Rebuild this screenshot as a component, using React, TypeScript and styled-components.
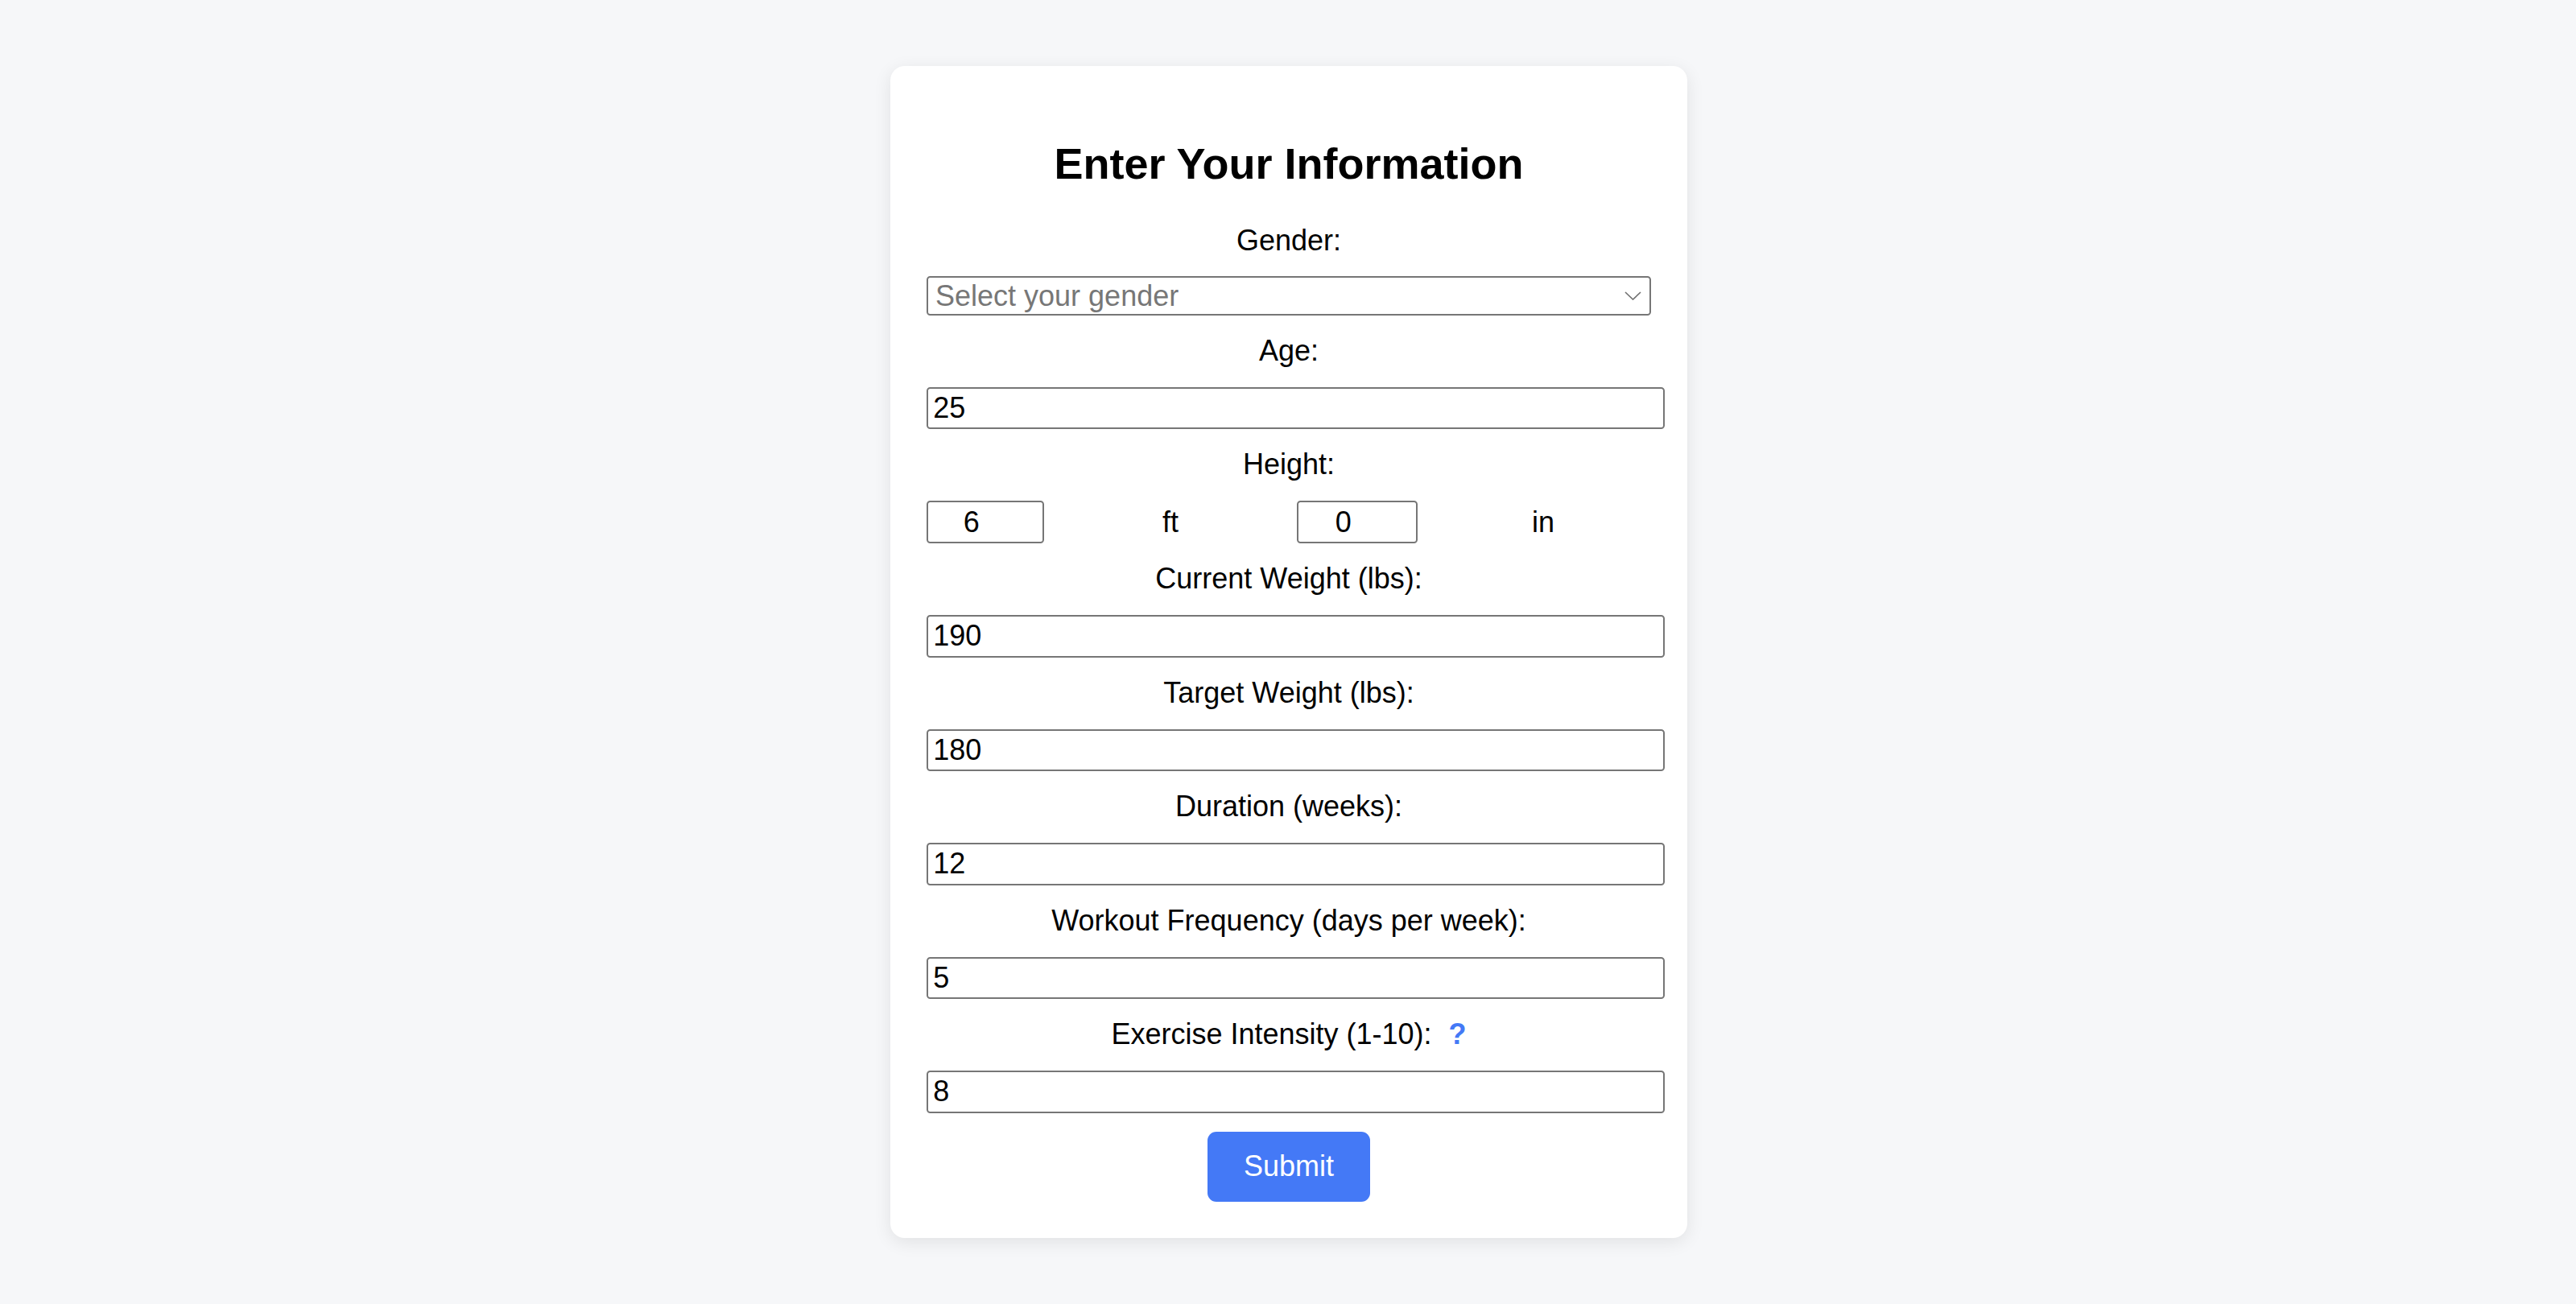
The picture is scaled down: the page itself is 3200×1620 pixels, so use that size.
import React from 'react';
import styled, { createGlobalStyle } from 'styled-components';

const GlobalStyle = createGlobalStyle`
  html, body {
    margin: 0;
    padding: 0;
    background: #f6f7f9;
  }
  body {
    font-family: "Liberation Sans", Arial, sans-serif;
    color: #000;
  }
  * { box-sizing: border-box; }
`;

const Page = styled.main`
  min-height: 1620px;
  display: flex;
  justify-content: center;
  align-items: flex-start;
  padding: 82px 0 0 2px;
`;

const Card = styled.form`
  width: 990px;
  background: #ffffff;
  border-radius: 18px;
  padding: 45px;
  box-shadow: 0 5px 22px rgba(0, 0, 0, 0.09);
  display: flex;
  flex-direction: column;
  align-items: stretch;
`;

const Title = styled.h2`
  margin: 45px 0 43.7px;
  font-size: 54px;
  line-height: 62px;
  font-weight: 700;
  text-align: center;
`;

const Field = styled.div`
  display: flex;
  flex-direction: column;
  align-items: flex-start;
  & + & {
    margin-top: 23.2px;
  }
`;

const Label = styled.label`
  align-self: stretch;
  display: block;
  text-align: center;
  font-size: 36px;
  line-height: 41.4px;
  margin-bottom: 24.3px;
`;

const Help = styled.span`
  margin-left: 21px;
  color: #4479f6;
  font-weight: 700;
  cursor: help;
`;

const TextInput = styled.input`
  box-sizing: content-box;
  width: 100%;
  height: 48.6px;
  padding: 0 6.25px;
  margin: 0;
  border: 2px solid #767676;
  border-radius: 4.5px;
  background: #fff;
  font-family: "Liberation Sans", Arial, sans-serif;
  font-size: 36px;
  color: #000;
  outline: none;
`;

const SelectWrap = styled.div`
  position: relative;
  width: 100%;
`;

const Select = styled.select`
  appearance: none;
  -webkit-appearance: none;
  width: 100%;
  height: 48.4px;
  padding: 0 40px 0 9px;
  margin: 0;
  border: 2px solid #767676;
  border-radius: 4.5px;
  background: #fff;
  font-family: "Liberation Sans", Arial, sans-serif;
  font-size: 36px;
  color: #777;
  outline: none;
`;

const Chevron = styled.svg`
  position: absolute;
  right: 12px;
  top: 19px;
  width: 21px;
  height: 11px;
  pointer-events: none;
`;

const HeightRow = styled.div`
  display: grid;
  grid-template-columns: 146px 314px 150px 312px;
  align-items: center;
`;

const SmallInput = styled.input`
  width: 100%;
  height: 53px;
  padding: 0 40.5px 0 6px;
  margin: 0;
  border: 2px solid #767676;
  border-radius: 4.5px;
  background: #fff;
  font-family: "Liberation Sans", Arial, sans-serif;
  font-size: 36px;
  color: #000;
  text-align: center;
  outline: none;
`;

const Unit = styled.span`
  text-align: center;
  font-size: 36px;
  line-height: 41.4px;
`;

const SubmitButton = styled.button`
  align-self: center;
  margin-top: 23.4px;
  padding: 0 45px;
  height: 87px;
  border: none;
  border-radius: 11px;
  background: #4479f6;
  color: #fff;
  font-family: "Liberation Sans", Arial, sans-serif;
  font-size: 36px;
  cursor: pointer;
`;

const fields: { id: string; label: string; value: string }[] = [
  { id: 'current', label: 'Current Weight (lbs):', value: '190' },
  { id: 'target', label: 'Target Weight (lbs):', value: '180' },
  { id: 'duration', label: 'Duration (weeks):', value: '12' },
  { id: 'frequency', label: 'Workout Frequency (days per week):', value: '5' },
];

export default function App() {
  return (
    <>
      <GlobalStyle />
      <Page>
        <Card onSubmit={(e) => e.preventDefault()}>
          <Title>Enter Your Information</Title>

          <Field>
            <Label htmlFor="gender">Gender:</Label>
            <SelectWrap>
              <Select id="gender" defaultValue="">
                <option value="" disabled>
                  Select your gender
                </option>
                <option value="male">Male</option>
                <option value="female">Female</option>
              </Select>
              <Chevron viewBox="0 0 21 11" fill="none">
                <polyline points="1,1 10.5,10 20,1" stroke="#6f6f6f" strokeWidth="1.6" />
              </Chevron>
            </SelectWrap>
          </Field>

          <Field>
            <Label htmlFor="age">Age:</Label>
            <TextInput id="age" type="text" inputMode="numeric" defaultValue="25" />
          </Field>

          <Field>
            <Label>Height:</Label>
            <HeightRow>
              <SmallInput type="text" inputMode="numeric" defaultValue="6" aria-label="feet" />
              <Unit>ft</Unit>
              <SmallInput type="text" inputMode="numeric" defaultValue="0" aria-label="inches" />
              <Unit>in</Unit>
            </HeightRow>
          </Field>

          {fields.map((f) => (
            <Field key={f.id}>
              <Label htmlFor={f.id}>{f.label}</Label>
              <TextInput id={f.id} type="text" inputMode="numeric" defaultValue={f.value} />
            </Field>
          ))}

          <Field>
            <Label htmlFor="intensity">
              Exercise Intensity (1-10):<Help title="1 = very light, 10 = maximum effort">?</Help>
            </Label>
            <TextInput id="intensity" type="text" inputMode="numeric" defaultValue="8" />
          </Field>

          <SubmitButton type="submit">Submit</SubmitButton>
        </Card>
      </Page>
    </>
  );
}
